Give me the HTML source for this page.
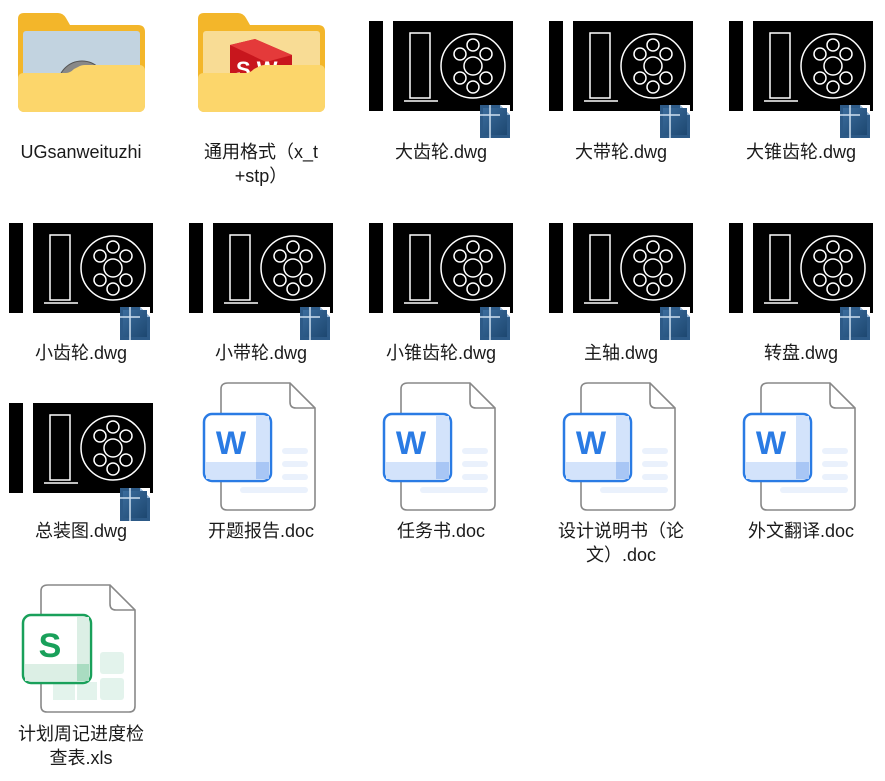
<!DOCTYPE html>
<html><head><meta charset="utf-8"><style>
html,body{margin:0;padding:0;background:#fff;width:885px;height:781px;overflow:hidden;position:relative}
.l{position:absolute;width:180px;text-align:center;font-family:"Liberation Sans","Noto Sans CJK SC",sans-serif;font-size:18px;line-height:24px;color:#1a1a1a}
svg{position:absolute;overflow:visible}
</style></head><body>
<svg width="0" height="0" style="position:absolute">
<defs>
<g id="ov">
<rect x="0" y="0" width="30" height="33" fill="#2d5a87"/>
<polygon points="20,0 30,10 30,0" fill="#fff"/>
<polygon points="20,0 30,10 20,10" fill="#8fb3d6"/>
<rect x="3" y="3" width="24" height="27" fill="url(#og)"/>
<line x1="10" y1="0" x2="10" y2="33" stroke="#cfe0f0" stroke-width="1.5"/>
<line x1="0" y1="10" x2="20" y2="10" stroke="#cfe0f0" stroke-width="1.5"/>
</g>
<linearGradient id="og" x1="0" y1="0" x2="1" y2="1"><stop offset="0" stop-color="#3b6c9c"/><stop offset="1" stop-color="#1d4770"/></linearGradient>
<g id="dwg">
<rect x="1" y="0" width="14" height="90" fill="#000"/>
<rect x="25" y="0" width="120" height="90" fill="#000"/>
<g fill="none" stroke="#fff" stroke-width="1.5">
<rect x="42" y="12" width="20" height="65"/>
<circle cx="105" cy="45" r="32"/>
<circle cx="105" cy="45" r="9"/>
<circle cx="92" cy="33" r="6"/><circle cx="118" cy="33" r="6"/>
<circle cx="92" cy="57" r="6"/><circle cx="118" cy="57" r="6"/>
<circle cx="105" cy="24" r="6"/><circle cx="105" cy="66" r="6"/>
<line x1="36" y1="80" x2="70" y2="80"/>
</g>
</g>
<g id="doc">
<path d="M28,3 H90 L115,28 V124 Q115,130 109,130 H27 Q21,130 21,124 V9 Q21,3 28,3 Z" fill="#fff" stroke="#888" stroke-width="1.6"/>
<path d="M90,3 V22 Q90,28 96,28 H115" fill="none" stroke="#888" stroke-width="1.6"/>
<rect x="40" y="107" width="68" height="6" rx="3" fill="#eaf1fc"/>
</g>
<g id="word">
<use href="#doc"/>
<rect x="82" y="68" width="26" height="6" rx="3" fill="#eaf1fc"/>
<rect x="82" y="81" width="26" height="6" rx="3" fill="#eaf1fc"/>
<rect x="82" y="94" width="26" height="6" rx="3" fill="#eaf1fc"/>
<rect x="4" y="34" width="67" height="67" rx="8" fill="#fff" stroke="#2a7be4" stroke-width="2.5"/>
<rect x="56" y="36" width="13" height="63" fill="#d3e3fb"/>
<rect x="6" y="82" width="63" height="17" fill="#d3e3fb"/>
<rect x="56" y="82" width="13" height="17" fill="#a8c6f5"/>
<text x="31" y="74" text-anchor="middle" font-family="Liberation Sans,sans-serif" font-weight="bold" font-size="32" fill="#2a7be4">W</text>
</g>
</defs>
</svg>

<svg style="left:18px;top:13px" width="128" height="100" viewBox="0 0 128 100">
<path d="M6,0 H40 Q45,0 48,5 L52,12 H120 Q127,12 127,19 V92 Q127,99 120,99 H7 Q0,99 0,92 V6 Q0,0 6,0Z" fill="#f3b62a"/>
<rect x="5" y="18" width="117" height="60" rx="3" fill="#c2d3e0"/>
<circle cx="64" cy="72" r="24" fill="#888" stroke="#555" stroke-width="1"/>
<path d="M0,66 Q0,60 6,60 H48 Q52,60 56,56 L60,54 Q63,52 67,52 H121 Q127,52 127,58 V92 Q127,99 120,99 H7 Q0,99 0,92Z" fill="#fcd66b"/>
</svg>
<div class="l" style="left:-9px;top:140px">UGsanweituzhi</div>

<svg style="left:198px;top:13px" width="128" height="100" viewBox="0 0 128 100">
<path d="M6,0 H40 Q45,0 48,5 L52,12 H120 Q127,12 127,19 V92 Q127,99 120,99 H7 Q0,99 0,92 V6 Q0,0 6,0Z" fill="#f3b62a"/>
<rect x="5" y="18" width="117" height="60" rx="3" fill="#f8dc95"/>
<polygon points="32,32 57,26 94,42 94,66 32,66" fill="#c8161d"/>
<polygon points="32,32 57,26 94,42 68,49" fill="#e43a3a"/>
<text x="38" y="64" font-family="Liberation Sans,sans-serif" font-weight="bold" font-size="22" fill="#fff">S W</text>
<path d="M0,66 Q0,60 6,60 H48 Q52,60 56,56 L60,54 Q63,52 67,52 H121 Q127,52 127,58 V92 Q127,99 120,99 H7 Q0,99 0,92Z" fill="#fcd66b"/>
</svg>
<div class="l" style="left:171px;top:140px">通用格式（x_t<br>+stp）</div>

<svg style="left:368px;top:21px" width="150" height="120"><use href="#dwg"/><use href="#ov" x="112" y="84"/></svg>
<div class="l" style="left:351px;top:140px">大齿轮.dwg</div>
<svg style="left:548px;top:21px" width="150" height="120"><use href="#dwg"/><use href="#ov" x="112" y="84"/></svg>
<div class="l" style="left:531px;top:140px">大带轮.dwg</div>
<svg style="left:728px;top:21px" width="150" height="120"><use href="#dwg"/><use href="#ov" x="112" y="84"/></svg>
<div class="l" style="left:711px;top:140px">大锥齿轮.dwg</div>

<svg style="left:8px;top:223px" width="150" height="120"><use href="#dwg"/><use href="#ov" x="112" y="84"/></svg>
<div class="l" style="left:-9px;top:341px">小齿轮.dwg</div>
<svg style="left:188px;top:223px" width="150" height="120"><use href="#dwg"/><use href="#ov" x="112" y="84"/></svg>
<div class="l" style="left:171px;top:341px">小带轮.dwg</div>
<svg style="left:368px;top:223px" width="150" height="120"><use href="#dwg"/><use href="#ov" x="112" y="84"/></svg>
<div class="l" style="left:351px;top:341px">小锥齿轮.dwg</div>
<svg style="left:548px;top:223px" width="150" height="120"><use href="#dwg"/><use href="#ov" x="112" y="84"/></svg>
<div class="l" style="left:531px;top:341px">主轴.dwg</div>
<svg style="left:728px;top:223px" width="150" height="120"><use href="#dwg"/><use href="#ov" x="112" y="84"/></svg>
<div class="l" style="left:711px;top:341px">转盘.dwg</div>

<svg style="left:8px;top:403px" width="150" height="120"><use href="#dwg"/><use href="#ov" x="112" y="85"/></svg>
<div class="l" style="left:-9px;top:519px">总装图.dwg</div>
<svg style="left:200px;top:380px" width="120" height="135"><use href="#word"/></svg>
<div class="l" style="left:171px;top:519px">开题报告.doc</div>
<svg style="left:380px;top:380px" width="120" height="135"><use href="#word"/></svg>
<div class="l" style="left:351px;top:519px">任务书.doc</div>
<svg style="left:560px;top:380px" width="120" height="135"><use href="#word"/></svg>
<div class="l" style="left:531px;top:519px">设计说明书（论<br>文）.doc</div>
<svg style="left:740px;top:380px" width="120" height="135"><use href="#word"/></svg>
<div class="l" style="left:711px;top:519px">外文翻译.doc</div>

<svg style="left:20px;top:582px" width="120" height="135">
<path d="M28,3 H90 L115,28 V124 Q115,130 109,130 H27 Q21,130 21,124 V9 Q21,3 28,3 Z" fill="#fff" stroke="#888" stroke-width="1.6"/>
<path d="M90,3 V22 Q90,28 96,28 H115" fill="none" stroke="#888" stroke-width="1.6"/>
<rect x="80" y="70" width="24" height="22" rx="3" fill="#e3f3ec"/>
<rect x="80" y="96" width="24" height="22" rx="3" fill="#e3f3ec"/>
<rect x="33" y="100" width="22" height="18" fill="#e3f3ec"/>
<rect x="57" y="100" width="20" height="18" fill="#e3f3ec"/>
<rect x="3" y="33" width="68" height="68" rx="8" fill="#fff" stroke="#19a05a" stroke-width="2.5"/>
<rect x="57" y="35" width="12" height="64" fill="#dcefe5"/>
<rect x="5" y="82" width="64" height="17" fill="#dcefe5"/>
<rect x="57" y="82" width="12" height="17" fill="#a9dcc1"/>
<text x="30" y="75" text-anchor="middle" font-family="Liberation Sans,sans-serif" font-weight="bold" font-size="34" fill="#19a05a">S</text>
</svg>
<div class="l" style="left:-9px;top:722px">计划周记进度检<br>查表.xls</div>
</body></html>
